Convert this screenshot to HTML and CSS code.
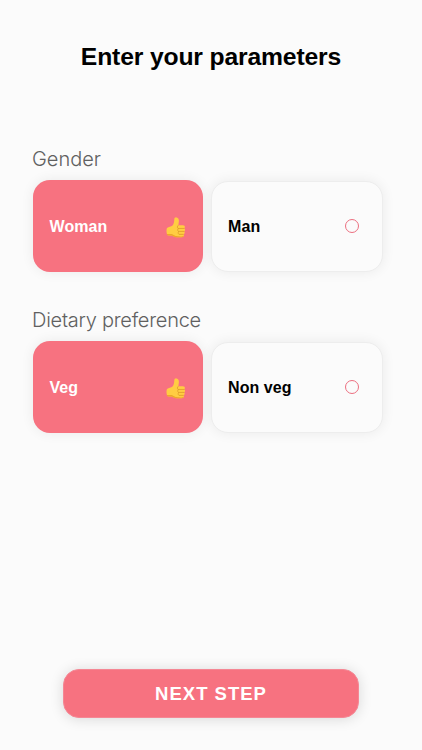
FILE: index.html
```html
<!DOCTYPE html>
<html lang="en">
<head>
<meta charset="utf-8">
<title>Enter your parameters</title>
<link rel="stylesheet" href="styles.css">
</head>
<body>
<svg class="defs" aria-hidden="true">
  <symbol id="thumb" viewBox="0 0 22 22" preserveAspectRatio="none">
    <path fill="#ffcd42" d="M1.200 11.400C3 10.400 5.500 10.400 7.200 8.900 8.700 7 9 5.200 9.100 2.800 9.100 1.100 10 .300 11.500.400c2.200.200 2.800 2.200 2.700 4-.1 1.600-.5 2.900-.6 4.200h5c1.500 0 2.300.900 2.200 1.900 0 .700-.4 1.200-.9 1.500.800.300 1.100.900 1 1.600 0 .800-.5 1.400-1.100 1.600.600.300.900.800.800 1.400-.1.900-.6 1.400-1.300 1.600.400.300.500.700.4 1.200-.2 1.200-1 1.700-2.300 1.700h-5.800c-2.800 0-3.700-1.700-5.900-1.800-1.600 0-2.900.2-3.700-.2C.300 17.600.200 12.600 1.200 11.400z"/>
    <path fill="#eea52c" d="M1 17.800c2 .5 4.500-.6 6.500.6 2.500 1.500 4 2 9.600 1.900 1 0 1.700-.2 2.300-.6-.1 1.200-.9 1.500-2.200 1.500h-5.800c-2.800 0-3.700-1.700-5.900-1.800-1.600 0-3 .2-4-.5-.4-.4-.5-.6-.5-1.100z"/>
    <path fill="none" stroke="#dc9828" stroke-width=".8" stroke-linecap="round" d="M13.200 8.900c-1 .9-.9 2.400.1 3.100h6.500M13.400 12.100c-.8.900-.7 2.300.3 3h5.900M13.700 15.200c-.6.900-.5 2.300.5 3h4.700"/>
  </symbol>
</svg>
<main class="screen">
  <h1 class="title">Enter your parameters</h1>
  <section class="group">
    <h2 class="label">Gender</h2>
    <div class="options">
      <div class="card selected"><span class="name">Woman</span><svg class="thumb"><use href="#thumb"/></svg></div>
      <div class="card"><span class="name">Man</span><span class="ring"></span></div>
    </div>
  </section>
  <section class="group">
    <h2 class="label diet">Dietary preference</h2>
    <div class="options">
      <div class="card selected"><span class="name">Veg</span><svg class="thumb"><use href="#thumb"/></svg></div>
      <div class="card"><span class="name">Non veg</span><span class="ring"></span></div>
    </div>
  </section>
  <button class="next" type="button">NEXT STEP</button>
</main>
</body>
</html>
```
FILE: styles.css
```css
* { box-sizing: border-box; }
body { margin: 0; background: #fbfbfb; font-family: "Liberation Sans", Arial, sans-serif; color: #000; }
.defs { display: none; }
.screen { height: 750px; display: flex; flex-direction: column; padding: 42px 0 32px; }
.title { margin: 0 0 71px; font-size: 24.700px; line-height: 30px; font-weight: 700; letter-spacing: -.150px; text-align: center; }
.group { height: 161px; padding-left: 33px; }
.label { margin: 0 0 0 -1px; height: 37px; font: 300 20px/32px Inter, "Liberation Sans", sans-serif; color: #606060; }
.diet { letter-spacing: -.250px; }
.options { display: flex; gap: 8px; align-items: center; }
.card { width: 172px; height: 91px; padding: 0 23px 0 16px; border-radius: 17px; display: flex; align-items: center; justify-content: space-between; background: #fbfbfb; border: 1px solid #ededed; box-shadow: 0 0 13px rgba(0, 0, 0, .07); }
.card.selected { width: 170px; height: 92px; padding: 0 17px 0 16.500px; border: 0; background: #f77280; color: #fff; }
.name { font-size: 16px; line-height: 20px; font-weight: 700; letter-spacing: .080px; padding-top: 2px; }
.thumb { width: 20px; height: 21px; margin-top: 3px; }
.ring { width: 14px; height: 14px; border: 1px solid #ec6f80; border-radius: 50%; }
.next { width: 296px; height: 49px; margin: auto 0 0 63px; padding: 0; border: 1px solid #f58794; border-radius: 16px; background: #f77280; color: #fff; font: 700 18.500px/47px "Liberation Sans", Arial, sans-serif; letter-spacing: 1px; box-shadow: 0 1px 14px rgba(0, 0, 0, .14); }
```
